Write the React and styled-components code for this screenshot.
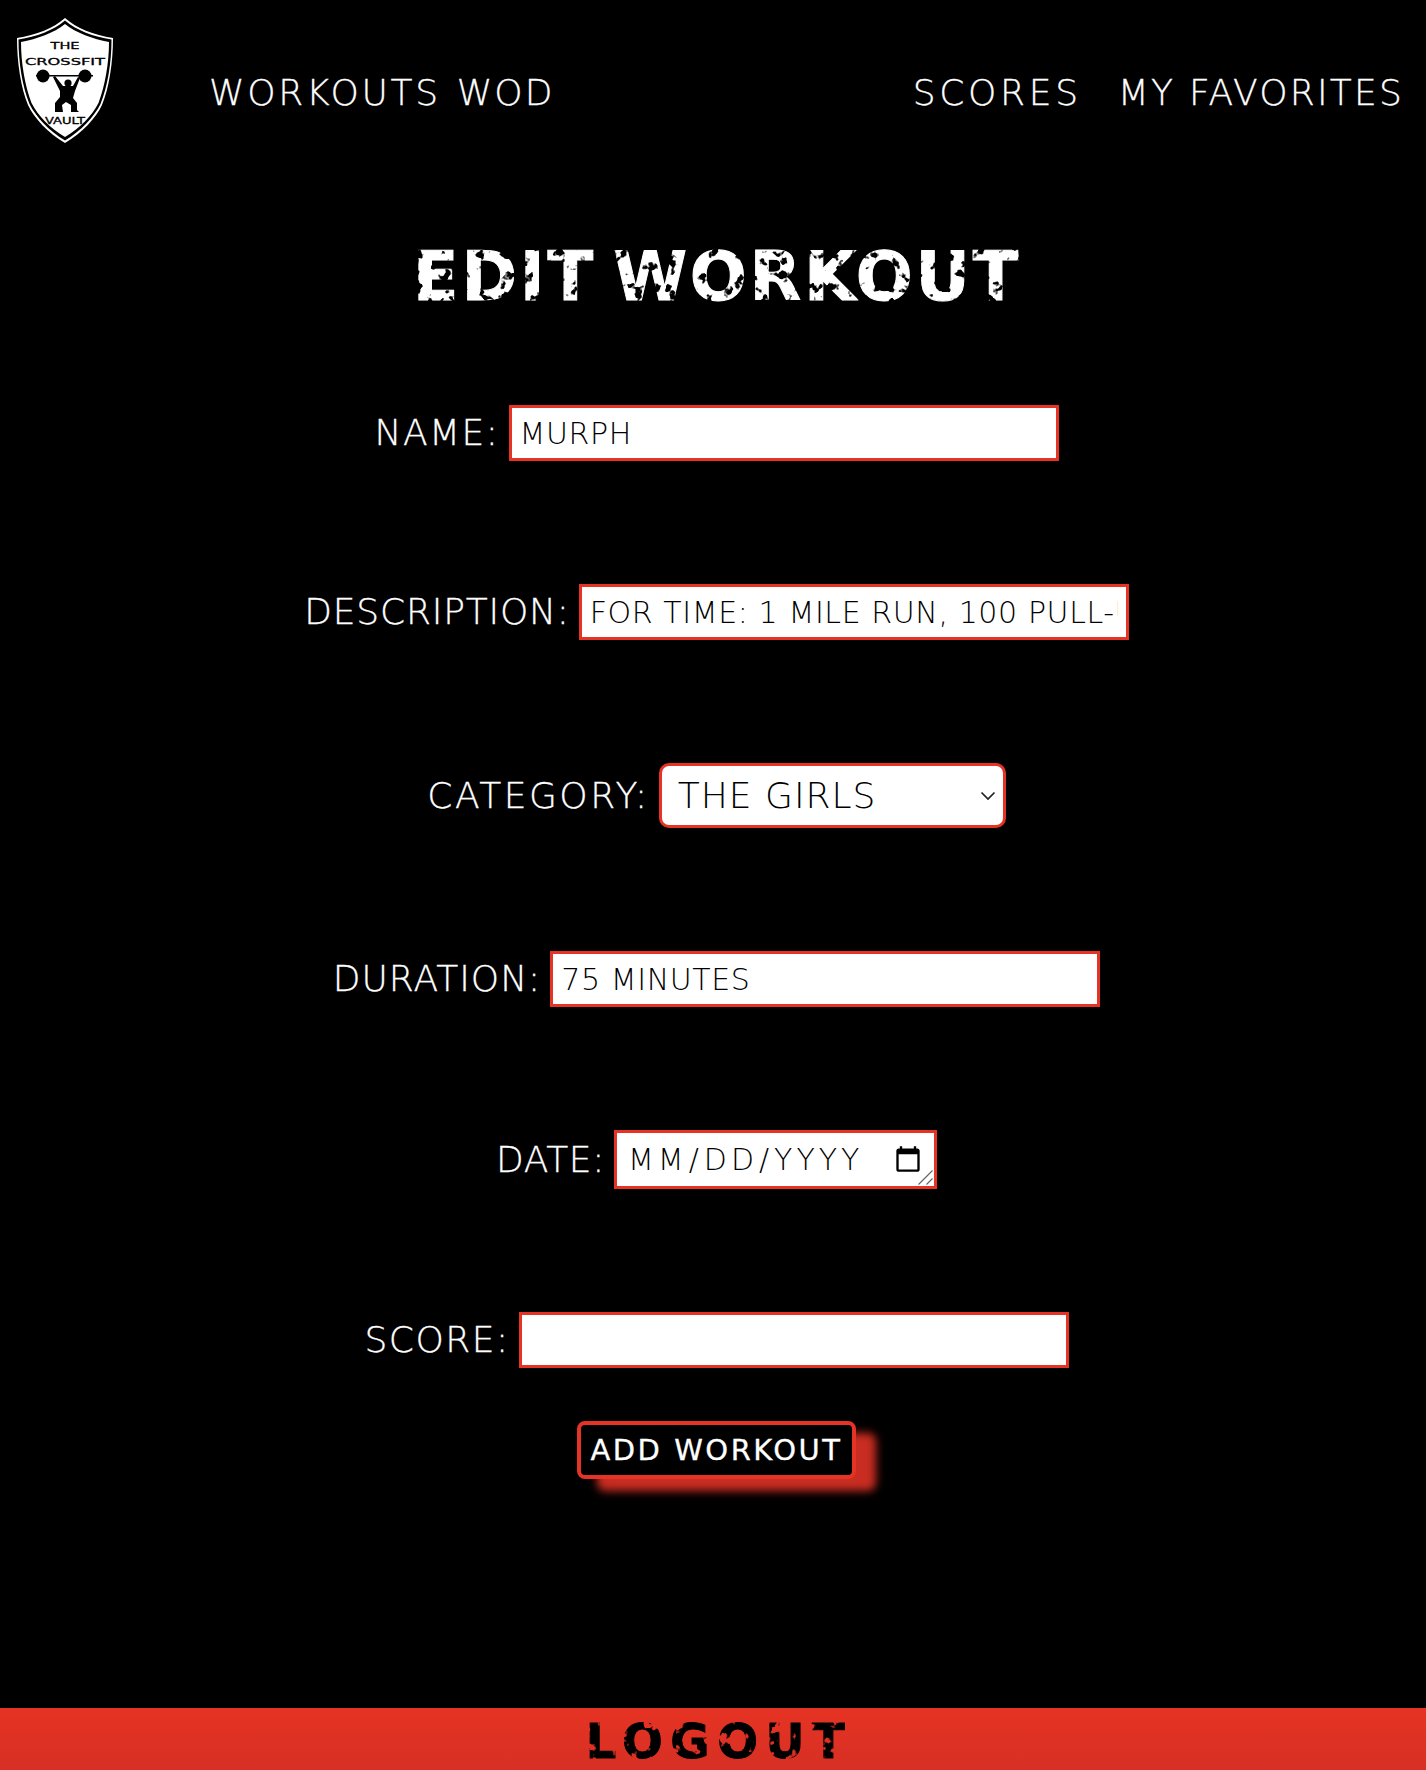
import React from "react";
import styled, { createGlobalStyle } from "styled-components";

const RED = "#e53325";
const WIDE = `"DejaVu Sans", "Liberation Sans", sans-serif`;

const CHEVRON = encodeURIComponent(
  `<svg xmlns="http://www.w3.org/2000/svg" width="16" height="10" viewBox="0 0 16 10"><path d="M1.500 1.500 L8 8 L14.500 1.500" fill="none" stroke="#222" stroke-width="1.700"/></svg>`
);
const GRIP = encodeURIComponent(
  `<svg xmlns="http://www.w3.org/2000/svg" width="15" height="15" viewBox="0 0 15 15"><path d="M0.500 14.500 L14.500 0.500 M8.500 14.500 L14.500 8.500" fill="none" stroke="#666" stroke-width="1.200"/></svg>`
);

const GlobalStyle = createGlobalStyle`
  html, body {
    margin: 0;
    background: #000;
    color: #fff;
    font-family: ${WIDE};
  }
`;

const Page = styled.div`
  min-height: 1770px;
  display: flex;
  flex-direction: column;
  background: #000;
`;

const Nav = styled.nav`
  display: flex;
  align-items: flex-start;
  padding: 18px 22px 0 16px;
`;

const LogoWrap = styled.div`
  width: 99px;
  height: 127px;
  margin-right: 94px;
`;

const NavGroup = styled.div`
  display: flex;
  gap: ${(p) => p.$gap}px;
  margin-top: 51px;
  margin-left: ${(p) => (p.$right ? "auto" : "0")};
`;

const NavLink = styled.a`
  font-size: 36px;
  font-weight: 200;
  line-height: 48px;
  letter-spacing: ${(p) => p.$track || 2.7}px;
  -webkit-text-stroke: 0.3px #fff;
  color: #fff;
  white-space: nowrap;
`;

const Title = styled.h1`
  margin: 93px 0 0;
  padding-left: 8px;
  text-align: center;
  font-size: 67px;
  line-height: 78px;
  font-weight: 700;
  letter-spacing: 2.800px;
  word-spacing: -9px;
  -webkit-text-stroke: 1px #fff;
  color: #fff;
  filter: url(#distress);
`;

const Form = styled.form`
  display: flex;
  flex-direction: column;
  align-items: center;
  margin-top: 89px;
  padding-left: 7px;
`;

const Row = styled.div`
  display: flex;
  align-items: center;
  justify-content: center;
  gap: 9px;
  margin-bottom: 123px;
  &:nth-last-child(2) {
    margin-bottom: 53px;
  }
`;

const Label = styled.label`
  font-size: 36px;
  font-weight: 200;
  letter-spacing: ${(p) => p.$track || 1.5}px;
  -webkit-text-stroke: 0.3px #fff;
  line-height: 48px;
  color: #fff;
`;

const TextInput = styled.input`
  box-sizing: border-box;
  width: 550px;
  height: 56px;
  padding: 0 8px;
  border: 3px solid ${RED};
  border-radius: 0;
  background: #fff;
  color: #000;
  font-family: ${WIDE};
  font-size: 30px;
  font-weight: 200;
  letter-spacing: 0.6px;
  text-transform: uppercase;
  outline: none;
`;

const DateInput = styled(TextInput)`
  width: 323px;
  height: 59px;
  padding: 0 9px 0 10px;
  letter-spacing: 4px;
  background: #fff url("data:image/svg+xml,${GRIP}") no-repeat right 1px bottom 1px;
`;

const Select = styled.select`
  box-sizing: border-box;
  width: 347px;
  height: 65px;
  padding: 0 17px 0 16px;
  border: 3px solid ${RED};
  border-radius: 10px;
  appearance: none;
  background: #fff url("data:image/svg+xml,${CHEVRON}") no-repeat right 7px center;
  color: #000;
  font-family: ${WIDE};
  font-size: 36px;
  font-weight: 200;
  letter-spacing: 1px;
  text-transform: uppercase;
  outline: none;
`;

const SubmitButton = styled.button`
  box-sizing: border-box;
  width: 279px;
  height: 58px;
  padding: 0;
  border: 4px solid ${RED};
  border-radius: 8px;
  background: #000;
  color: #fff;
  font-family: ${WIDE};
  font-size: 29px;
  font-weight: 400;
  letter-spacing: 2.500px;
  -webkit-text-stroke: 0.3px #fff;
  box-shadow: 20px 12px 8px rgba(229, 51, 37, 0.88);
  white-space: nowrap;
`;

const Footer = styled.footer`
  margin-top: auto;
  box-sizing: border-box;
  height: 62px;
  padding: 4px 0 0 12px;
  display: flex;
  align-items: center;
  justify-content: center;
  background: linear-gradient(#e63323, #d63024);
`;

const Logout = styled.span`
  font-size: 48px;
  line-height: 58px;
  font-weight: 700;
  letter-spacing: 7.500px;
  -webkit-text-stroke: 1px #000;
  color: #000;
  filter: url(#distress);
`;

const HiddenSvg = styled.svg`
  display: block;
  width: 0;
  height: 0;
`;

const Logo = () => (
  <svg width="99" height="127" viewBox="0 0 99 127">
    <path d="M49 0 C60 10 78 17 97 20 C97 45 93 70 86 87 C80 100 66 115 49 125 C32 115 18 100 12 87 C5 70 1 45 1 20 C20 17 38 10 49 0 Z" fill="#fff" />
    <path d="M49 2.500 C60 12 78 19 95.500 21.500 C95.500 45 91.500 69 84.500 86 C78 99 65 113 49 122.500 C33 113 20 99 13.500 86 C6.500 69 2.500 45 2.500 21.500 C20 19 38 12 49 2.500 Z" fill="#000" />
    <path d="M49 6 C60 15 77 21 93 24 C93 45 89 68 82.500 85 C76 98 64 110 49 119 C34 110 22 98 15.500 85 C9 68 5 45 5 24 C21 21 38 15 49 6 Z" fill="#fff" />
    <g fontFamily={WIDE} fontWeight="400" fill="#000" stroke="#000" strokeWidth="0.300" textAnchor="middle">
      <text x="49" y="31" fontSize="9" textLength="29" lengthAdjust="spacingAndGlyphs">THE</text>
      <text x="49" y="47" fontSize="9.500" textLength="80" lengthAdjust="spacingAndGlyphs">CROSSFIT</text>
      <text x="49" y="106" fontSize="9" textLength="40" lengthAdjust="spacingAndGlyphs">VAULT</text>
    </g>
    <path d="M20 57 H77 V58.500 H20 Z" fill="#000" />
    <ellipse cx="27" cy="58" rx="6.500" ry="6.500" fill="#000" />
    <ellipse cx="69" cy="58" rx="6.500" ry="6.500" fill="#000" />
    <circle cx="52" cy="65" r="3.600" fill="#000" />
    <path
      d="M37 59 L39 58 L47 68 L57 68 L62 59 L64 60 L59 73 L57 80 L61 85 L61 92 L63 94 L55 94 L55 87 L50 84 L46 87 L47 94 L39 94 L39 85 L44 79 L44 73 Z"
      fill="#000"
    />
  </svg>
);

const App = () => (
  <Page>
    <GlobalStyle />
    <HiddenSvg aria-hidden="true">
      <filter id="distress" x="0" y="0" width="100%" height="100%">
        <feTurbulence type="fractalNoise" baseFrequency="0.09" numOctaves="3" seed="7" result="noise" />
        <feColorMatrix
          in="noise"
          type="matrix"
          values="0 0 0 0 0  0 0 0 0 0  0 0 0 0 0  0 0 0 -11 7.600"
          result="holes"
        />
        <feComposite in="SourceGraphic" in2="holes" operator="in" />
      </filter>
    </HiddenSvg>

    <Nav>
      <LogoWrap>
        <Logo />
      </LogoWrap>
      <NavGroup $gap={16}>
        <NavLink>WORKOUTS</NavLink>
        <NavLink $track={2}>WOD</NavLink>
      </NavGroup>
      <NavGroup $right $gap={36}>
        <NavLink $track={3.7}>SCORES</NavLink>
        <NavLink $track={2.2}>MY FAVORITES</NavLink>
      </NavGroup>
    </Nav>

    <Title>EDIT WORKOUT</Title>

    <Form onSubmit={(e) => e.preventDefault()}>
      <Row>
        <Label htmlFor="name">NAME:</Label>
        <TextInput id="name" defaultValue="Murph" />
      </Row>
      <Row>
        <Label htmlFor="description" $track={0.8}>DESCRIPTION:</Label>
        <TextInput
          id="description"
          defaultValue="For time: 1 mile run, 100 pull-ups, 200 push-ups, 300 squats, 1 mile run"
        />
      </Row>
      <Row>
        <Label htmlFor="category" $track={2.5}>CATEGORY:</Label>
        <Select id="category" defaultValue="girls">
          <option value="girls">The Girls</option>
          <option value="heroes">Heroes</option>
          <option value="open">Open</option>
        </Select>
      </Row>
      <Row>
        <Label htmlFor="duration" $track={1}>DURATION:</Label>
        <TextInput id="duration" defaultValue="75 minutes" />
      </Row>
      <Row>
        <Label htmlFor="date" $track={0.6}>DATE:</Label>
        <DateInput id="date" type="date" />
      </Row>
      <Row>
        <Label htmlFor="score">SCORE:</Label>
        <TextInput id="score" defaultValue="" />
      </Row>
      <SubmitButton type="submit">ADD WORKOUT</SubmitButton>
    </Form>

    <Footer>
      <Logout>LOGOUT</Logout>
    </Footer>
  </Page>
);

export default App;
